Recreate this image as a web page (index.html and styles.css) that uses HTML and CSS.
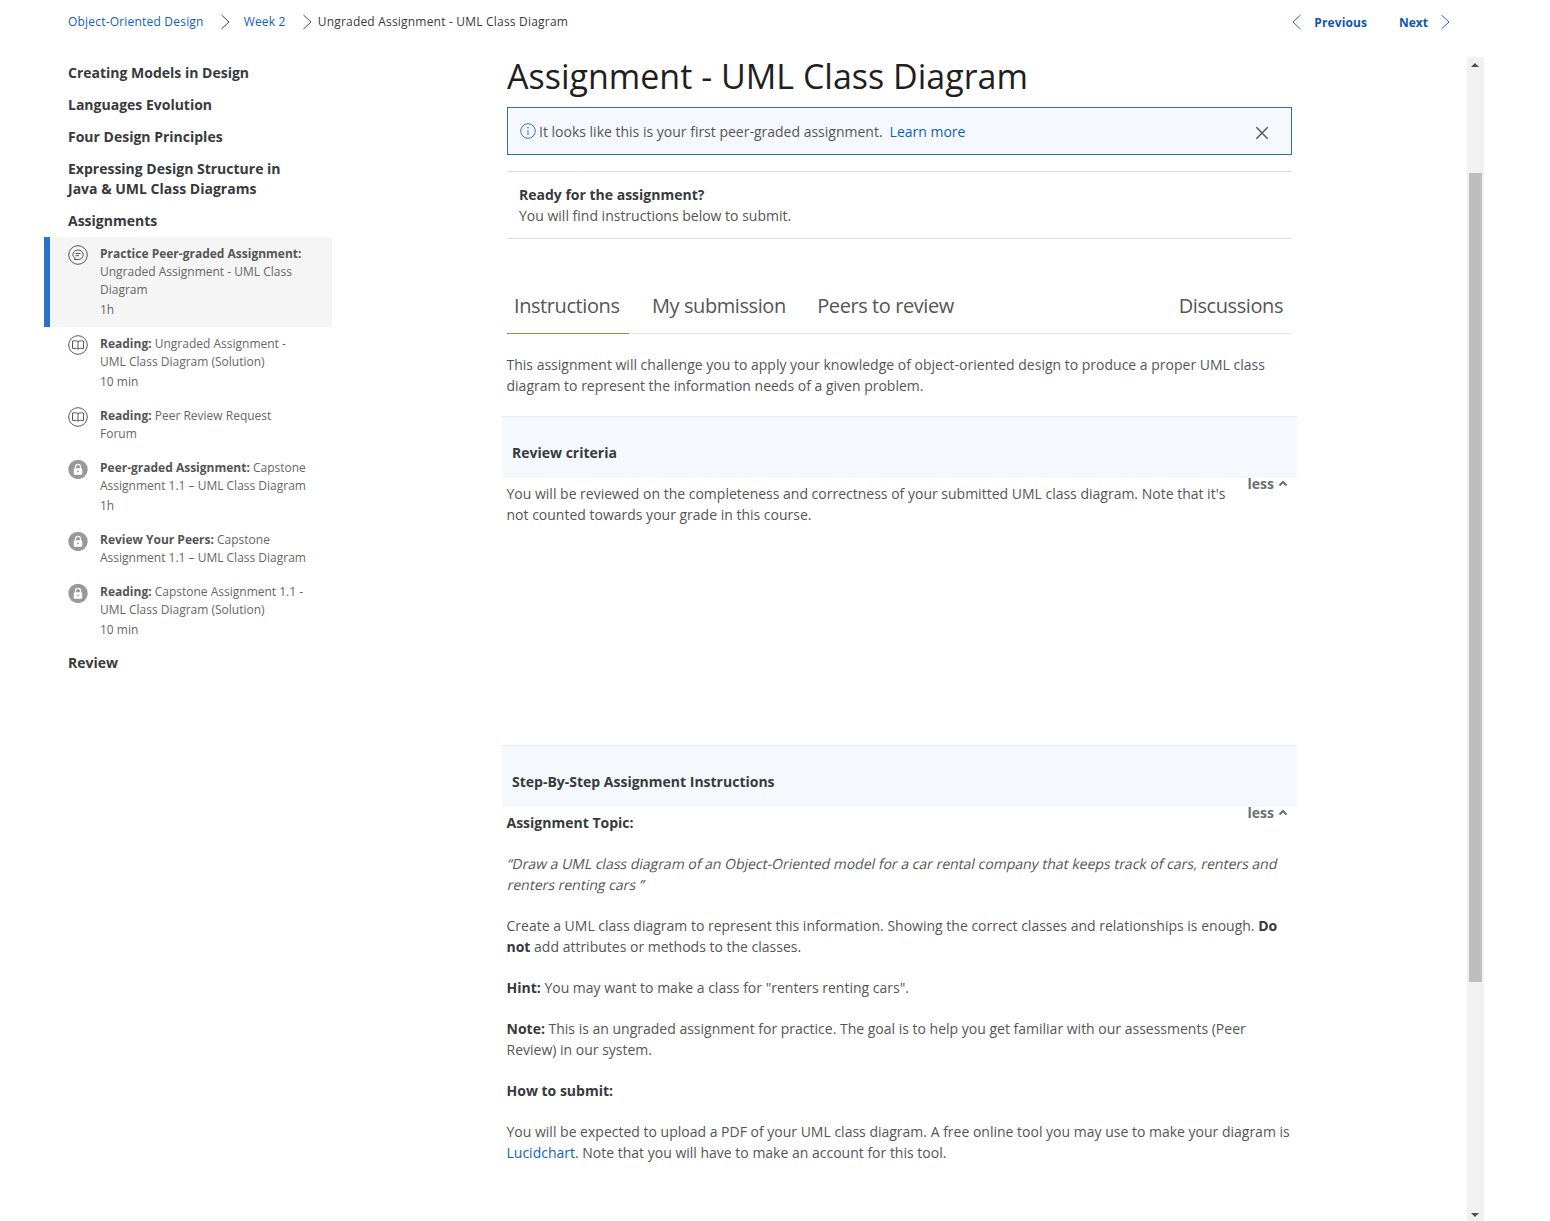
FILE: index.html
```html
<!DOCTYPE html>
<html lang="en">
<head>
<meta charset="utf-8">
<title>Assignment - UML Class Diagram</title>
<link rel="stylesheet" href="styles.css">
</head>
<body>
<header class="topbar">
  <nav class="crumbs">
    <a class="link" href="#">Object-Oriented Design</a>
    <svg class="crumb-chev" viewBox="0 0 10 16"><path d="M1.5 1l7.5 7-7.5 7"/></svg>
    <a class="link" href="#">Week 2</a>
    <svg class="crumb-chev second" viewBox="0 0 10 16"><path d="M1.5 1l7.5 7-7.5 7"/></svg>
    <span class="crumb-current">Ungraded Assignment - UML Class Diagram</span>
  </nav>
  <nav class="pager">
    <svg class="pager-chev" viewBox="0 0 10 16"><path d="M8.5 1L1 8l7.5 7"/></svg>
    <a class="pager-link prev" href="#">Previous</a>
    <a class="pager-link next" href="#">Next</a>
    <svg class="pager-chev" viewBox="0 0 10 16"><path d="M1.5 1l7.5 7-7.5 7"/></svg>
  </nav>
</header>

<div class="layout">
  <aside class="sidebar">
    <h3 class="lesson">Creating Models in Design</h3>
    <h3 class="lesson">Languages Evolution</h3>
    <h3 class="lesson">Four Design Principles</h3>
    <h3 class="lesson">Expressing Design Structure in<br>Java &amp; UML Class Diagrams</h3>
    <h3 class="lesson">Assignments</h3>
    <ul class="items">
      <li class="item active">
        <svg class="icon" viewBox="0 0 20 20"><circle cx="10" cy="10" r="9.300"/><path d="M4.800 9.800c0-2.900 2.300-4.800 5.200-4.800s5.200 1.900 5.200 4.800-2.300 4.700-5.200 4.700H6.300l1-1.600C5.700 12.200 4.800 11.200 4.800 9.800z"/><path d="M7.500 8.500h5M7.500 10.700h3.500"/></svg>
        <div class="item-body"><p class="item-title"><b>Practice Peer-graded Assignment:</b> Ungraded Assignment - UML Class Diagram</p><p class="item-time">1h</p></div>
      </li>
      <li class="item">
        <svg class="icon" viewBox="0 0 20 20"><circle cx="10" cy="10" r="9.300"/><path d="M10 6.500C8.500 5.700 6.500 5.700 4.500 6v7.500c2-.3 4-.3 5.500.5 1.500-.8 3.500-.8 5.500-.5V6c-2-.3-4-.3-5.500.5zM10 6.500V14"/></svg>
        <div class="item-body"><p class="item-title"><b>Reading:</b> Ungraded Assignment - UML Class Diagram (Solution)</p><p class="item-time">10 min</p></div>
      </li>
      <li class="item">
        <svg class="icon" viewBox="0 0 20 20"><circle cx="10" cy="10" r="9.300"/><path d="M10 6.500C8.500 5.700 6.500 5.700 4.500 6v7.500c2-.3 4-.3 5.500.5 1.500-.8 3.500-.8 5.500-.5V6c-2-.3-4-.3-5.500.5zM10 6.500V14"/></svg>
        <div class="item-body"><p class="item-title"><b>Reading:</b> Peer Review Request<br>Forum</p></div>
      </li>
      <li class="item">
        <svg class="icon lock" viewBox="0 0 20 20"><circle class="lock-bg" cx="10" cy="10.400" r="9.700"/><path class="lock-shackle" d="M7.500 9.500V7.800a2.500 2.500 0 0 1 5 0v1.700"/><rect class="lock-body" x="5.800" y="9.300" width="8.400" height="6.500" rx=".8"/><circle class="lock-bg" cx="10" cy="12.400" r=".9"/></svg>
        <div class="item-body"><p class="item-title"><b>Peer-graded Assignment:</b> Capstone Assignment 1.1 – UML Class Diagram</p><p class="item-time">1h</p></div>
      </li>
      <li class="item">
        <svg class="icon lock" viewBox="0 0 20 20"><circle class="lock-bg" cx="10" cy="10.400" r="9.700"/><path class="lock-shackle" d="M7.500 9.500V7.800a2.500 2.500 0 0 1 5 0v1.700"/><rect class="lock-body" x="5.800" y="9.300" width="8.400" height="6.500" rx=".8"/><circle class="lock-bg" cx="10" cy="12.400" r=".9"/></svg>
        <div class="item-body"><p class="item-title"><b>Review Your Peers:</b> Capstone Assignment 1.1 – UML Class Diagram</p></div>
      </li>
      <li class="item">
        <svg class="icon lock" viewBox="0 0 20 20"><circle class="lock-bg" cx="10" cy="10.400" r="9.700"/><path class="lock-shackle" d="M7.500 9.500V7.800a2.500 2.500 0 0 1 5 0v1.700"/><rect class="lock-body" x="5.800" y="9.300" width="8.400" height="6.500" rx=".8"/><circle class="lock-bg" cx="10" cy="12.400" r=".9"/></svg>
        <div class="item-body"><p class="item-title"><b>Reading:</b> Capstone Assignment 1.1 - UML Class Diagram (Solution)</p><p class="item-time">10 min</p></div>
      </li>
    </ul>
    <h3 class="lesson review">Review</h3>
  </aside>

  <main class="content">
    <h1 class="title">Assignment - UML Class Diagram</h1>
    <div class="notice">
      <svg class="info" viewBox="0 0 16 16"><circle cx="8" cy="8" r="7.300"/><path d="M8 7v5"/><circle class="info-dot" cx="8" cy="4.700" r=".8"/></svg>
      <span class="notice-text">It looks like this is your first peer-graded assignment.</span>
      <a class="link notice-link" href="#">Learn more</a>
      <svg class="close" viewBox="0 0 16 16"><path d="M1.500 1.500l13 13M14.500 1.500l-13 13"/></svg>
    </div>
    <div class="ready">
      <p class="ready-title">Ready for the assignment?</p>
      <p>You will find instructions below to submit.</p>
    </div>
    <div class="tabs">
      <a class="tab active" href="#">Instructions</a>
      <a class="tab" href="#">My submission</a>
      <a class="tab" href="#">Peers to review</a>
      <a class="tab last" href="#">Discussions</a>
    </div>
    <p class="intro">This assignment will challenge you to apply your knowledge of object-oriented design to produce a proper UML class diagram to represent the information needs of a given problem.</p>

    <section class="block criteria">
      <h2 class="block-head">Review criteria</h2>
      <a class="less" href="#">less <svg viewBox="0 0 10 7"><path d="M1.500 5.500L5 2l3.500 3.500"/></svg></a>
      <p class="block-text">You will be reviewed on the completeness and correctness of your submitted UML class diagram. Note that it's<br>not counted towards your grade in this course.</p>
    </section>

    <section class="block steps">
      <h2 class="block-head">Step-By-Step Assignment Instructions</h2>
      <a class="less" href="#">less <svg viewBox="0 0 10 7"><path d="M1.500 5.500L5 2l3.500 3.500"/></svg></a>
      <div class="block-text">
        <p><b>Assignment Topic:</b></p>
        <p><span class="oblique">“Draw a UML class diagram of an Object-Oriented model for a car rental company that keeps track of cars, renters and</span><span class="oblique">renters renting cars ”</span></p>
        <p>Create a UML class diagram to represent this information. Showing the correct classes and relationships is enough. <b>Do not</b> add attributes or methods to the classes.</p>
        <p><b>Hint:</b> You may want to make a class for "renters renting cars".</p>
        <p><b>Note:</b> This is an ungraded assignment for practice. The goal is to help you get familiar with our assessments (Peer Review) in our system.</p>
        <p><b>How to submit:</b></p>
        <p>You will be expected to upload a PDF of your UML class diagram. A free online tool you may use to make your diagram is <a class="link" href="#">Lucidchart</a>. Note that you will have to make an account for this tool.</p>
      </div>
    </section>
  </main>

  <div class="scrollbar">
    <span class="arrow up"></span>
    <div class="thumb"></div>
    <span class="arrow down"></span>
  </div>
</div>
</body>
</html>
```

FILE: styles.css
```css
* { box-sizing: border-box; }
html, body { margin: 0; height: 1221px; overflow: hidden; background: #fff; }
body { font-family: "Open Sans", sans-serif; color: #373a3c; font-size: 14px; line-height: 21px; }
p, h1, h2, h3, ul { margin: 0; padding: 0; }
a { text-decoration: none; }
.link { color: #0f5fb9; }

.topbar { display: flex; justify-content: space-between; align-items: center; height: 43px; padding: 0 100px 0 68px; font-size: 12px; }
.crumbs, .pager { display: flex; align-items: center; }
.crumbs { letter-spacing: .2px; }
.pager { padding-top: 1px; }
.crumb-chev, .pager-chev { width: 10px; height: 16px; fill: none; stroke: #444; stroke-width: 1; }
.crumb-chev { margin: 0 14px 0 16px; }
.crumb-chev.second { margin: 0 6px 0 16px; }
.crumb-current { color: #373a3c; }
.pager-chev { stroke: #1f65c0; }
.pager-link { color: #0f56b3; font-weight: 700; }
.prev { margin: 0 32px 0 12px; letter-spacing: .1px; }
.next { margin-right: 12px; }

.layout { display: grid; grid-template-columns: 458px 965px 17px; column-gap: 0; padding-left: 44px; height: 1178px; }

.sidebar { width: 288px; padding-top: 20px; }
.lesson { font-size: 14px; line-height: 20px; font-weight: 700; color: #373a3c; padding-left: 24px; margin-bottom: 12px; }
.items { list-style: none; margin-top: -6px; }
.item { display: flex; padding: 8px 0 8px 24px; font-size: 12px; line-height: 18px; color: #666; }
.item.active { background: #f5f5f5; border-left: 6px solid #2a73cc; padding-left: 18px; }
.item b { font-weight: 700; color: #555; }
.item-title { width: 212px; }
.item-time { margin-top: 2px; line-height: 18px; }
.icon { flex: none; width: 20px; height: 20px; margin-right: 12px; fill: none; stroke: #555; stroke-width: 1; }
.lock { stroke: none; }
.lock-bg { fill: #999; }
.lock-body { fill: #fff; }
.lock-shackle { fill: none; stroke: #fff; stroke-width: 1.200; }
.review { margin-top: 6px; }

.content { padding-top: 10px; padding-right: 175px; }
.title { font-size: 34px; line-height: 46px; font-weight: 400; color: #1f1f1f; margin: 0 0 8px 5px; white-space: nowrap; }
.notice { display: flex; align-items: center; height: 48px; margin-left: 5px; width: 785px; background: #f5f9fe; border: 1px solid #2f6ea5; padding: 0 22px 0 12px; }
.info { width: 16px; height: 16px; margin-right: 3px; fill: none; stroke: #1f65c0; stroke-width: .9; }
.info-dot { fill: #1f65c0; stroke: none; }
.notice-text { color: #555; }
.notice-link { margin-left: 7px; }
.close { width: 14px; height: 14px; margin: 4px 0 0 auto; fill: none; stroke: #555; stroke-width: 1.600; }
.ready { margin: 16px 0 0 5px; width: 785px; border-top: 1px solid #ddd; border-bottom: 1px solid #ddd; height: 68px; padding: 12px 12px 0; color: #555; }
.ready-title { font-weight: 700; color: #373a3c; }
.tabs { display: flex; margin: 40px 0 0 5px; width: 785px; height: 55px; border-bottom: 1px solid #e6e6e6; }
.tab { font-size: 20px; line-height: 53px; letter-spacing: -.42px; color: #555; padding: 0 8px; margin-right: 15.500px; height: 55px; }
.tab.active { color: #555; border-bottom: 1px solid #a08c45; padding: 0 9px 0 7px; }
.tab.last { margin: 0 0 0 auto; padding-right: 9px; }
.intro { margin: 20px 0 0 4.500px; width: 786px; color: #555; }
.block { position: relative; width: 795px; }
.criteria { margin-top: 20px; height: 329px; }
.block-head { font-size: 14px; line-height: 21px; font-weight: 700; color: #373a3c; background: #f5f9fe; border-top: 1px solid #e6ebf0; height: 62px; padding: 25px 10px 0; }
.block-text { margin: 5px 0 0 4.500px; width: 786px; color: #555; }
.block-text p { margin-bottom: 20px; }
.block-text b { font-weight: 700; color: #373a3c; }
.oblique { display: block; transform: skewX(-12deg); transform-origin: 0 70%; white-space: nowrap; }
.less { position: absolute; top: 57px; right: 9px; font-weight: 700; color: #6a6f73; display: flex; align-items: center; gap: 4px; }
.less svg { width: 10px; height: 7px; fill: none; stroke: #6a6f73; stroke-width: 2; }

.scrollbar { display: flex; flex-direction: column; align-items: center; background: #f1f1f1; height: 1164px; margin-top: 14px; position: relative; }
.arrow { position: absolute; left: 4px; width: 0; height: 0; border-left: 4px solid transparent; border-right: 4px solid transparent; }
.arrow.up { top: 6px; border-bottom: 4px solid #505050; }
.arrow.down { bottom: 4px; border-top: 4px solid #505050; }
.thumb { width: 13px; height: 809px; margin-top: 116px; background: #bebebe; }
```
